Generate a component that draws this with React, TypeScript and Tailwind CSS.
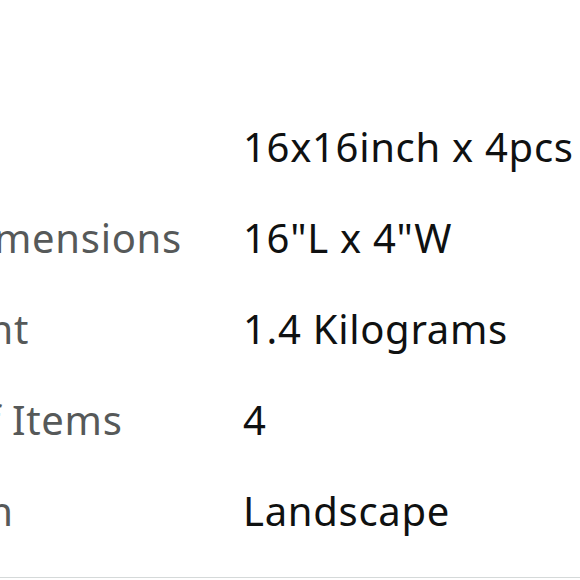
const details = [
  { label: "Size", value: "16x16inch x 4pcs" },
  { label: "Product Dimensions", value: '16"L x 4"W' },
  { label: "Item Weight", value: "1.4 Kilograms" },
  { label: "Number of Items", value: "4" },
  { label: "Orientation", value: "Landscape" },
];

export default function App() {
  return (
    <div className="w-[580px] h-[580px] overflow-hidden bg-white" style={{ fontFamily: '"Noto Sans", "Open Sans", sans-serif' }}>
      <div className="pt-[101px] -ml-[210px] w-[900px]">
        <div className="border-b border-[#d5d9d9] pb-[21px]">
          {details.map((d) => (
            <div key={d.label} className="flex h-[91px] items-center text-[40px] leading-[91px] tracking-[0.7px] whitespace-nowrap">
              <div className="w-[453px] shrink-0 text-[#565959]">{d.label}</div>
              <div className="text-[#0f1111]">{d.value}</div>
            </div>
          ))}
        </div>
      </div>
    </div>
  );
}
